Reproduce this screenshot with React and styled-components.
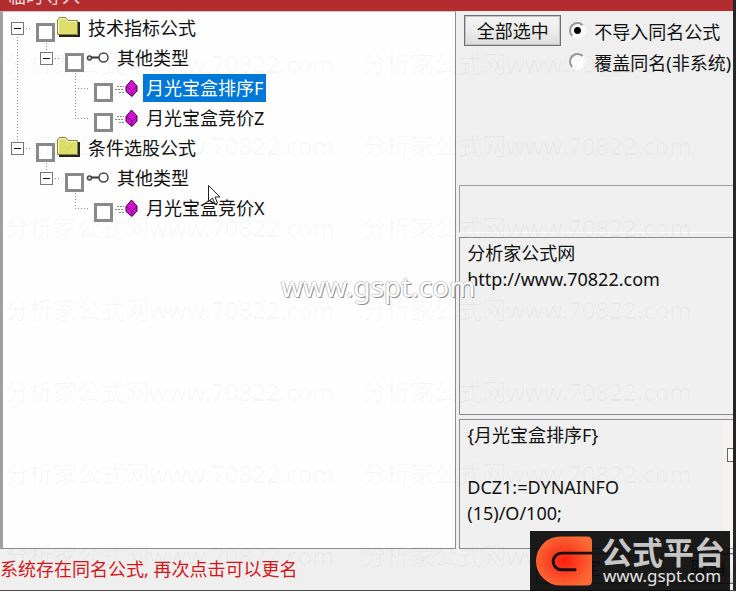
import React, { useState } from 'react';
import styled, { createGlobalStyle, css } from 'styled-components';

const GlobalStyle = createGlobalStyle`
  * {
    box-sizing: border-box;
  }
  body {
    margin: 0;
    background: #fff;
    color: #111;
    font-family: "Noto Sans", "Noto Sans CJK SC", sans-serif;
    font-size: 18px;
  }
  button, input, textarea {
    margin: 0;
    font: inherit;
    color: inherit;
  }
`;

// Window
const Page = styled.div`
  position: relative;
  min-height: 100vh;
  padding: 0 4px 3px 0;
  display: flex;
  overflow: hidden;
`;

const Dialog = styled.main`
  flex: 1;
  min-width: 0;
  display: flex;
  flex-direction: column;
  background: #efefef;
  border-right: 3px solid #262626;
  border-bottom: 1px solid #4a4a4a;
  overflow: hidden;
`;

const TitleBar = styled.header`
  height: 11px;
  padding: 0 8px 3px;
  display: flex;
  align-items: flex-end;
  background: #b32d30;
  color: #f3dcdc;
  overflow: hidden;
`;

const Title = styled.h1`
  margin: 0;
  font-size: 18px;
  font-weight: 400;
  line-height: 24px;
`;

const Content = styled.div`
  flex: 1;
  display: grid;
  grid-template-columns: 5fr 3fr;
  gap: 3px;
`;

// Formula tree
const TreePane = styled.section`
  min-width: 0;
  padding-top: 1px;
  background: #fefefe;
  border: 1px solid #8c8c8c;
  border-top-color: #d5c4c4;
  border-left: 3px solid #a0a0a0;
`;

const Row = styled.div`
  height: 30px;
  display: flex;
  align-items: center;
`;

const dotsDown = 'repeating-linear-gradient(#8a8a8a 0 1px, transparent 1px 3px)';
const dotsAcross = 'repeating-linear-gradient(90deg, #8a8a8a 0 1px, transparent 1px 3px)';

const Guide = styled.span`
  width: 29px;
  height: 30px;
  display: flex;
  align-items: center;
  justify-content: center;
  background-repeat: no-repeat;
  background-image: ${p => (p.$up ? dotsDown : 'none')},
    ${p => (p.$down ? dotsDown : 'none')},
    ${p => (p.$across ? dotsAcross : 'none')};
  background-size: 1px 15px, 1px 15px, 15px 1px;
  background-position: 14px 0, 14px 15px, 14px 15px;
`;

const Expander = styled.button`
  width: 13px;
  height: 13px;
  padding: 0;
  border: 1px solid #777;
  background: linear-gradient(#111, #111) center / 7px 1px no-repeat #fff;
`;

const CheckBox = styled.input`
  appearance: none;
  flex: none;
  align-self: flex-end;
  width: 19px;
  height: 19px;
  && {
    margin: 0 1px 1px 4px;
  }
  background: #fff;
  border: 3px solid #8a8a8a;
  &:checked {
    background: #555;
  }
`;

const IconSlot = styled.span`
  width: 24px;
  height: 24px;
  display: flex;
`;

const NodeLabel = styled.label`
  margin-left: 5px;
  padding: 0 3px;
  line-height: 28px;
  white-space: nowrap;
  ${p =>
    p.$selected &&
    css`
      background: #0078d7;
      color: #fff;
    `}
`;

// Right side
const Side = styled.div`
  min-width: 0;
  display: flex;
  flex-direction: column;
  gap: 4px;
`;

const Options = styled.div`
  flex: 1;
  padding: 4px 0 0 5px;
  display: flex;
  align-items: flex-start;
  gap: 8px;
`;

const PushButton = styled.button`
  flex: none;
  width: ${p => p.$width || 97}px;
  height: 31px;
  padding: 0;
  border: 1px solid #707070;
  box-shadow: inset 0 0 0 1px #c4c4c4;
  background: linear-gradient(#f3f3f3, #ededed 50%, #dcdcdc);
  line-height: 26px;
`;

const RadioGroup = styled.div`
  display: flex;
  flex-direction: column;
`;

const RadioLabel = styled.label`
  height: 31px;
  display: flex;
  align-items: center;
  gap: 8px;
  white-space: nowrap;
`;

const Radio = styled.input`
  appearance: none;
  flex: none;
  width: 17px;
  height: 17px;
  border-radius: 50%;
  border: 2px solid;
  border-color: #999 #fafafa #fafafa #999;
  background: #fdfdfd;
  &:checked {
    background: radial-gradient(circle, #000 0 3px, #fdfdfd 4px);
  }
`;

const EmptyBox = styled.div`
  height: 48px;
  border: 1px solid #a0a0a0;
  border-right: 0;
  border-bottom-color: #fafafa;
`;

const TextPane = styled.textarea`
  display: block;
  width: 100%;
  height: ${p => p.$height}px;
  padding: 2px 7px;
  border: 1px solid #8c8c8c;
  border-right: 0;
  border-radius: 0;
  outline: 0;
  background: #f0f0f0;
  line-height: 26px;
  resize: none;
  overflow: hidden;
`;

const CodeBox = styled.div`
  position: relative;
`;

const ScrollTrack = styled.div`
  position: absolute;
  top: 1px;
  right: 0;
  bottom: 1px;
  width: 10px;
  padding-top: 28px;
  background: #f4f3f0;
  display: flex;
  justify-content: flex-end;
`;

const ScrollThumb = styled.span`
  width: 6px;
  height: 14px;
  border: 1px solid #666;
  border-right: 0;
  background: #fff;
`;

// Bottom line
const StatusBar = styled.footer`
  height: 41px;
  padding-bottom: 3px;
  display: flex;
  align-items: center;
  justify-content: space-between;
`;

const Warning = styled.p`
  margin: 0;
  color: #d8161a;
  white-space: nowrap;
`;

const Actions = styled.div`
  width: 197px;
  display: flex;
  gap: 31px;
  overflow: hidden;
`;

// Marks lying over the window
const WatermarkLayer = styled.div`
  position: absolute;
  inset: 0;
  padding-top: 23px;
  overflow: hidden;
  pointer-events: none;
`;

const WatermarkLine = styled.div`
  height: 82px;
  padding-left: 5px;
  display: flex;
  color: rgba(0, 0, 0, 0.03);
  font-size: 24px;
  line-height: 82px;
`;

const WatermarkText = styled.span`
  flex: none;
  width: 357px;
`;

const SiteMark = styled.div`
  position: absolute;
  left: 281px;
  top: 267px;
  color: #fff;
  font-size: 28px;
  line-height: 38px;
  text-shadow: 1px 1px 0 #8f8f8f, -1px 0 0 #c8c8c8, 0 -1px 0 #d4d4d4;
  pointer-events: none;
`;

const Pointer = styled.svg`
  position: absolute;
  left: 208px;
  top: 185px;
  pointer-events: none;
`;

const Badge = styled.div`
  position: absolute;
  right: 10px;
  bottom: 3px;
  width: 200px;
  height: 60px;
  padding: 4px 5px;
  display: flex;
  gap: 9px;
  background: rgba(10, 10, 10, 0.93);
  pointer-events: none;
`;

const BadgeText = styled.div`
  display: flex;
  flex-direction: column;
  white-space: nowrap;
`;

const BadgeName = styled.strong`
  color: #c6c6c6;
  font-size: 31px;
  font-weight: 700;
  font-family: "Noto Sans CJK SC", sans-serif;
  line-height: 32px;
`;

const BadgeSite = styled.span`
  padding-left: 2px;
  color: #e4e4e4;
  font-size: 17px;
  line-height: 18px;
`;

const FolderIcon = () => (
  <svg width="24" height="24" viewBox="0 0 24 24">
    <path d="M3 20h20V6" fill="none" stroke="#222" strokeWidth="2" />
    <path d="M1.500 18.500V4l2-2.500h6L12 4.500h9.500v14z" fill="#dede6c" stroke="#85853c" />
    <path d="M2.500 17V5l1.500-2.500h5L11.500 5.500h9" fill="none" stroke="#ffffc4" />
  </svg>
);

const KeyIcon = () => (
  <svg width="24" height="24" viewBox="0 0 24 24">
    <path d="M6 11.500h9" stroke="#333" strokeWidth="2" />
    <circle cx="4.500" cy="12" r="2" fill="#ddd" stroke="#444" strokeWidth="1.500" />
    <circle cx="18.500" cy="11.500" r="4.500" fill="#fff" stroke="#444" strokeWidth="1.500" />
  </svg>
);

const GemIcon = () => (
  <svg width="24" height="24" viewBox="0 0 24 24">
    <path d="M3 10.500h7M1 13.500h9M5 16.500h6" stroke="#888" strokeDasharray="2 1" />
    <path d="M17.500 4l5.500 6v5l-5 5.500-6-5v-5z" fill="#d50fd5" stroke="#3a063a" />
    <path d="M12.500 10.500l5.500 4.500 5-4.500M18 15v5" fill="none" stroke="#760876" />
  </svg>
);

const icons = { folder: FolderIcon, key: KeyIcon, gem: GemIcon };

const rows = [
  { id: 'n1', icon: 'folder', text: '技术指标公式', guides: [{ down: true, across: true, box: true }] },
  { id: 'n2', icon: 'key', text: '其他类型', guides: [{ up: true, down: true }, { up: true, across: true, box: true }] },
  { id: 'n3', icon: 'gem', text: '月光宝盒排序F', guides: [{ up: true, down: true }, {}, { up: true, down: true, across: true }] },
  { id: 'n4', icon: 'gem', text: '月光宝盒竞价Z', guides: [{ up: true, down: true }, {}, { up: true, across: true }] },
  { id: 'n5', icon: 'folder', text: '条件选股公式', guides: [{ up: true, across: true, box: true }] },
  { id: 'n6', icon: 'key', text: '其他类型', guides: [{}, { up: true, across: true, box: true }] },
  { id: 'n7', icon: 'gem', text: '月光宝盒竞价X', guides: [{}, {}, { up: true, across: true }] },
];

const TreeRow = ({ row, selected, checked, onToggle }) => {
  const Icon = icons[row.icon];
  return (
    <Row>
      {row.guides.map((g, i) => (
        <Guide key={i} $up={g.up} $down={g.down} $across={g.across}>
          {g.box && <Expander type="button" aria-label="折叠" />}
        </Guide>
      ))}
      <CheckBox type="checkbox" id={row.id} checked={checked} onChange={onToggle} />
      <IconSlot>
        <Icon />
      </IconSlot>
      <NodeLabel htmlFor={row.id} $selected={selected}>{row.text}</NodeLabel>
    </Row>
  );
};

const App = () => {
  const [checked, setChecked] = useState({});
  const [mode, setMode] = useState('skip');

  const toggle = id => setChecked({ ...checked, [id]: !checked[id] });
  const selectAll = () => setChecked(Object.fromEntries(rows.map(r => [r.id, true])));

  return (
    <Page>
      <GlobalStyle />
      <Dialog>
        <TitleBar>
          <Title>临时导入</Title>
        </TitleBar>

        <Content>
          <TreePane>
            {rows.map(row => (
              <TreeRow
                key={row.id}
                row={row}
                selected={row.id === 'n3'}
                checked={!!checked[row.id]}
                onToggle={() => toggle(row.id)}
              />
            ))}
          </TreePane>

          <Side>
            <Options>
              <PushButton type="button" onClick={selectAll}>全部选中</PushButton>
              <RadioGroup>
                <RadioLabel>
                  <Radio type="radio" name="mode" checked={mode === 'skip'} onChange={() => setMode('skip')} />
                  不导入同名公式
                </RadioLabel>
                <RadioLabel>
                  <Radio type="radio" name="mode" checked={mode === 'cover'} onChange={() => setMode('cover')} />
                  覆盖同名(非系统)
                </RadioLabel>
              </RadioGroup>
            </Options>
            <EmptyBox />
            <TextPane
              $height={178}
              readOnly
              aria-label="说明"
              value={'分析家公式网\nhttp://www.70822.com'}
            />
            <CodeBox>
              <TextPane
                $height={130}
                readOnly
                aria-label="公式"
                value={'{月光宝盒排序F}\n\nDCZ1:=DYNAINFO\n(15)/O/100;'}
              />
              <ScrollTrack>
                <ScrollThumb />
              </ScrollTrack>
            </CodeBox>
          </Side>
        </Content>

        <StatusBar>
          <Warning>系统存在同名公式, 再次点击可以更名</Warning>
          <Actions>
            <PushButton type="button" $width={94}>确定</PushButton>
            <PushButton type="button" $width={94}>取消</PushButton>
          </Actions>
        </StatusBar>
      </Dialog>

      <WatermarkLayer aria-hidden="true">
        {[1, 2, 3, 4, 5, 6, 7].map(n => (
          <WatermarkLine key={n}>
            <WatermarkText>分析家公式网www.70822.com</WatermarkText>
            <WatermarkText>分析家公式网www.70822.com</WatermarkText>
          </WatermarkLine>
        ))}
      </WatermarkLayer>

      <SiteMark>www.gspt.com</SiteMark>

      <Pointer width="13" height="21" viewBox="0 0 13 21">
        <path d="M.5.500v16l4-3.500 2.500 6 2.500-1-2.500-6h5z" fill="#fff" stroke="#222" />
      </Pointer>

      <Badge>
        <svg width="58" height="52" viewBox="0 0 58 52">
          <defs>
            <radialGradient id="flame" cx="50%" cy="50%" r="55%">
              <stop offset="0" stopColor="#fb1d10" />
              <stop offset="1" stopColor="#fc6a35" />
            </radialGradient>
          </defs>
          <path d="M26 1h27q5 0 5 5v40q0 5-5 5H26A25 25 0 0 1 26 1z" fill="url(#flame)" />
          <path d="M58 18H27a8.500 8.500 0 0 0 0 17h15" fill="none" stroke="#1a1212" strokeWidth="3" />
        </svg>
        <BadgeText>
          <BadgeName>公式平台</BadgeName>
          <BadgeSite>www.gspt.com</BadgeSite>
        </BadgeText>
      </Badge>
    </Page>
  );
};

export default App;
